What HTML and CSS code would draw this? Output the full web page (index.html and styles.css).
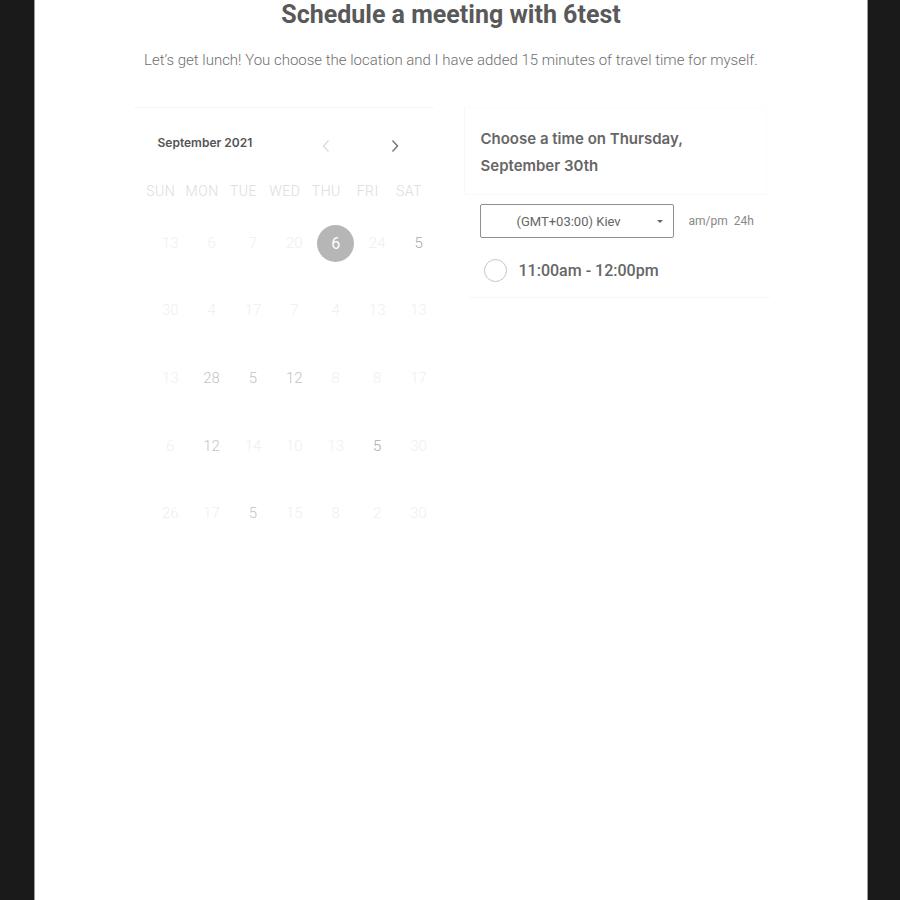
FILE: index.html
```html
<!DOCTYPE html>
<html>
<head>
<meta charset="utf-8">
<link rel="stylesheet" href="styles.css">
</head>
<body>
<div class="page">
  <h1 class="title">Schedule a meeting with 6test</h1>
  <p class="subtitle">Let’s get lunch! You choose the location and I have added 15 minutes of travel time for myself.</p>
  <div class="main">
    <section class="calendar">
      <div class="cal-head">
        <span class="month">September 2021</span>
        <svg class="nav prev" width="8" height="14" viewBox="0 0 8 14"><polyline points="6.5,1.5 1.5,7 6.5,12.5" fill="none" stroke="#dadada" stroke-width="1.3"/></svg>
        <svg class="nav next" width="8" height="14" viewBox="0 0 8 14"><polyline points="1.5,1.5 6.5,7 1.5,12.5" fill="none" stroke="#777" stroke-width="1.5"/></svg>
      </div>
      <div class="weekdays">
        <span>SUN</span><span>MON</span><span>TUE</span><span>WED</span><span>THU</span><span>FRI</span><span>SAT</span>
      </div>
      <div class="days">
        <span class="f">13</span><span class="f">6</span><span class="f">7</span><span class="f">20</span><span class="sel"><b>6</b></span><span class="f">24</span><span class="d">5</span>
        <span class="f">30</span><span class="f">4</span><span class="f">17</span><span class="f">7</span><span class="f">4</span><span class="f">13</span><span class="f">13</span>
        <span class="f">13</span><span class="m">28</span><span class="m">5</span><span class="m">12</span><span class="f">8</span><span class="f">8</span><span class="f">17</span>
        <span class="f">6</span><span class="m">12</span><span class="f">14</span><span class="f">10</span><span class="f">13</span><span class="d">5</span><span class="f">30</span>
        <span class="f">26</span><span class="f">17</span><span class="m">5</span><span class="f">15</span><span class="f">8</span><span class="f">2</span><span class="f">30</span>
      </div>
    </section>
    <section class="times">
      <div class="times-head">Choose a time on Thursday,<br>September 30th</div>
      <div class="tz-row">
        <div class="tz-select"><span>(GMT+03:00) Kiev</span><span class="caret"></span></div>
        <div class="fmt"><span>am/pm</span><span>24h</span></div>
      </div>
      <div class="slot">
        <span class="radio"></span>
        <span class="slot-label">11:00am - 12:00pm</span>
      </div>
    </section>
  </div>
</div>
</body>
</html>
```
FILE: styles.css
```css
html, body {
  margin: 0;
  padding: 0;
  background: #1a1a1a;
}
.page {
  margin-left: 34px;
  width: 832px;
  height: 900px;
  background: #fff;
  border-left: 1px solid #9a9a9a;
  border-right: 1px solid #9a9a9a;
  font-family: Roboto, "Liberation Sans", sans-serif;
  overflow: hidden;
}
.title {
  margin: 0;
  padding-top: 1px;
  text-align: center;
  font-size: 25px;
  line-height: 28px;
  font-weight: 700;
  color: #595959;
}
.subtitle {
  margin: 21px 0 0;
  text-align: center;
  font-size: 15px;
  line-height: 20px;
  font-weight: 300;
  color: #6f6f6f;
}
.main {
  display: grid;
  grid-template-columns: 300px 303px;
  column-gap: 30px;
  width: 633px;
  margin: 37px auto 0;
  transform: translateX(-1px);
}
.calendar {
  border-top: 1px solid #f6f6f6;
}
.cal-head {
  display: flex;
  align-items: center;
  height: 68px;
  padding-left: 24px;
  position: relative;
}
.month {
  font-family: Inter, Roboto, sans-serif;
  font-size: 12px;
  font-weight: 600;
  color: #555;
  margin-top: 0;
}
.nav {
  position: absolute;
  top: 31px;
}
.prev { left: 188px; }
.next { left: 257px; }
.weekdays {
  display: grid;
  grid-template-columns: repeat(7, 41.4px);
  padding-left: 6.5px;
  height: 30px;
  align-items: center;
  font-size: 14px;
  font-weight: 300;
  letter-spacing: 0.5px;
  color: #dcdcdc;
}
.weekdays span { text-align: center; }
.days {
  display: grid;
  grid-template-columns: repeat(7, 41.4px);
  grid-auto-rows: 67.6px;
  padding-left: 16px;
  margin-top: 9px;
  font-size: 15px;
  font-weight: 300;
  align-items: center;
}
.days span {
  text-align: center;
  line-height: 37px;
  margin-top: -11px;
}
.f { color: #efefef; }
.m { color: #c4c4c4; }
.d { color: #ababab; }
.days .sel {
  justify-self: center;
  width: 37px;
  height: 37px;
  border-radius: 50%;
  background: #b6b6b6;
  color: #fff;
  font-size: 16px;
}
.times-head {
  border: 1px solid #f8f8f8;
  border-right-color: #fcfcfc;
  border-top-color: #fcfcfc;
  padding: 17px 0 0 16px;
  height: 69px;
  font-family: Inter, Roboto, sans-serif;
  font-size: 15px;
  font-weight: 600;
  line-height: 27px;
  color: #666;
}
.tz-row {
  display: flex;
  align-items: center;
  margin-top: 9px;
  padding-left: 16px;
}
.tz-select {
  box-sizing: border-box;
  width: 194px;
  height: 34px;
  border: 1px solid #8f8f8f;
  border-radius: 2px;
  display: flex;
  align-items: center;
  padding-left: 36px;
  position: relative;
  font-size: 13px;
  color: #666;
}
.caret {
  position: absolute;
  right: 10px;
  top: 15px;
  width: 0;
  height: 0;
  border-left: 3px solid transparent;
  border-right: 3px solid transparent;
  border-top: 3px solid #666;
}
.fmt {
  display: flex;
  gap: 6px;
  margin-left: 15px;
  font-size: 12px;
  color: #888;
}
.slot {
  display: flex;
  align-items: center;
  gap: 12px;
  height: 58px;
  margin: 2px -3px 0 5px;
  padding: 4px 0 0 15px;
  border-bottom: 1px solid #f6f6f6;
  box-sizing: border-box;
}
.radio {
  width: 21px;
  height: 21px;
  border: 1px solid #c6c6c6;
  border-radius: 50%;
}
.slot-label {
  font-size: 16px;
  font-weight: 500;
  color: #666;
}
```
